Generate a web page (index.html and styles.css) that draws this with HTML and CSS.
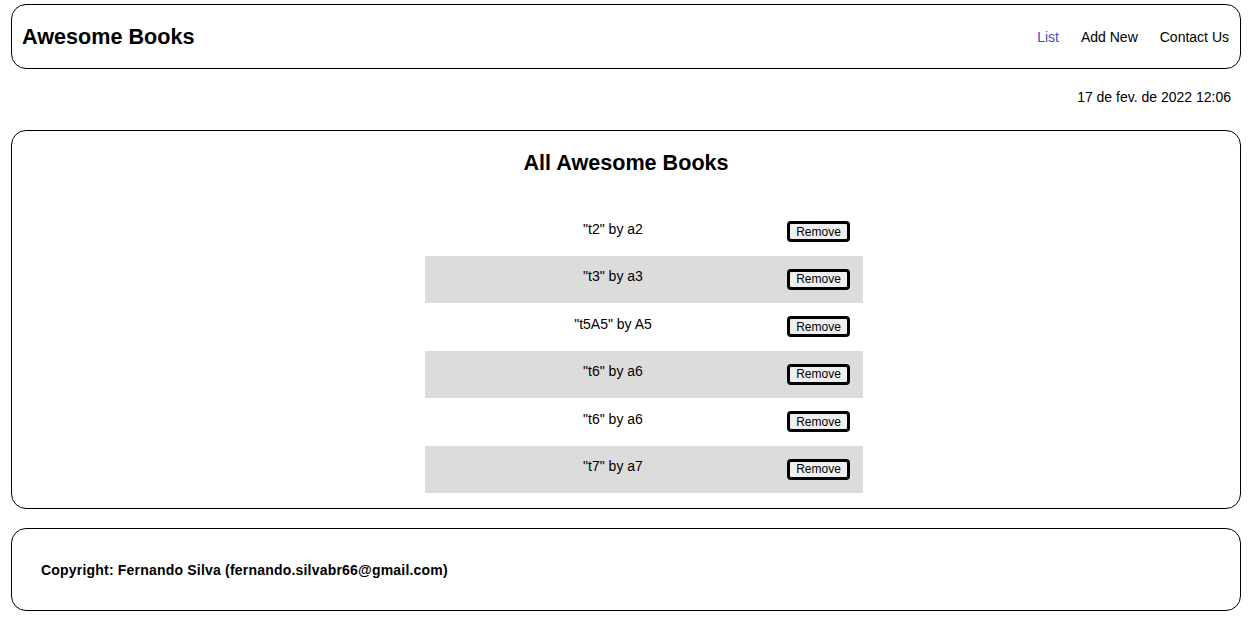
FILE: index.html
```html
<!DOCTYPE html>
<html lang="en">
<head>
<meta charset="utf-8">
<title>Awesome Books</title>
<link rel="stylesheet" href="styles.css">
</head>
<body>
<div class="page">
  <header class="header">
    <h1 class="logo">Awesome Books</h1>
    <nav class="nav">
      <a class="nav-link active" href="#">List</a>
      <a class="nav-link" href="#">Add New</a>
      <a class="nav-link" href="#">Contact Us</a>
    </nav>
  </header>
  <div class="date">17 de fev. de 2022 12:06</div>
  <main class="card list-card">
    <h2 class="list-title">All Awesome Books</h2>
    <div class="books">
      <div class="book"><span class="book-text">"t2" by a2</span><button class="remove">Remove</button></div>
      <div class="book alt"><span class="book-text">"t3" by a3</span><button class="remove">Remove</button></div>
      <div class="book"><span class="book-text">"t5A5" by A5</span><button class="remove">Remove</button></div>
      <div class="book alt"><span class="book-text">"t6" by a6</span><button class="remove">Remove</button></div>
      <div class="book"><span class="book-text">"t6" by a6</span><button class="remove">Remove</button></div>
      <div class="book alt"><span class="book-text">"t7" by a7</span><button class="remove">Remove</button></div>
    </div>
  </main>
  <footer class="card footer">
    <p class="copyright">Copyright: Fernando Silva (fernando.silvabr66@gmail.com)</p>
  </footer>
</div>
</body>
</html>
```

FILE: styles.css
```css
* { box-sizing: border-box; }
html, body { margin: 0; padding: 0; background: #fff; }
body {
  font-family: "Liberation Sans", Arial, sans-serif;
  color: #000;
  font-size: 14px;
}
.page {
  display: flex;
  flex-direction: column;
  padding: 4px 11px 0 11px;
}
.header {
  height: 65px;
  border: 1px solid #000;
  border-radius: 15px;
  display: flex;
  align-items: center;
  justify-content: space-between;
  padding: 0 11px 0 10px;
}
.logo {
  margin: 0;
  font-size: 21.6px;
  font-weight: bold;
}
.nav {
  display: flex;
  gap: 22px;
}
.nav-link {
  color: #000;
  text-decoration: none;
  font-size: 14px;
}
.nav-link.active { color: #4b4bc8; }
.date {
  text-align: right;
  padding-right: 10px;
  margin-top: 20px;
  line-height: 16px;
  height: 16px;
}
.card {
  border: 1px solid #000;
  border-radius: 15px;
}
.list-card {
  margin-top: 25px;
  height: 379px;
  display: flex;
  flex-direction: column;
  align-items: center;
}
.list-title {
  margin: 19px 0 0 0;
  font-size: 21.6px;
  font-weight: bold;
  line-height: 26px;
}
.books {
  margin-top: 32px;
  width: 438px;
  display: flex;
  flex-direction: column;
  align-self: flex-start;
  margin-left: 413px;
}
.book {
  height: 47.5px;
  display: flex;
  align-items: center;
  padding-right: 13px;
}
.book.alt { background: #dcdcdc; }
.book-text {
  width: 350px;
  padding-left: 26px;
  text-align: center;
  position: relative;
  top: -3px;
}
.remove {
  margin-left: 12px;
  width: 63px;
  height: 21px;
  padding: 0;
  border: 3px solid #000;
  border-radius: 4px;
  background: #efefef;
  font-family: "Liberation Sans", Arial, sans-serif;
  font-size: 12px;
  color: #000;
}
.footer {
  margin-top: 19px;
  height: 83px;
  display: flex;
  align-items: center;
  padding-left: 29px;
}
.copyright {
  margin: 0;
  font-weight: bold;
  font-size: 14px;
  letter-spacing: 0.2px;
}
```
